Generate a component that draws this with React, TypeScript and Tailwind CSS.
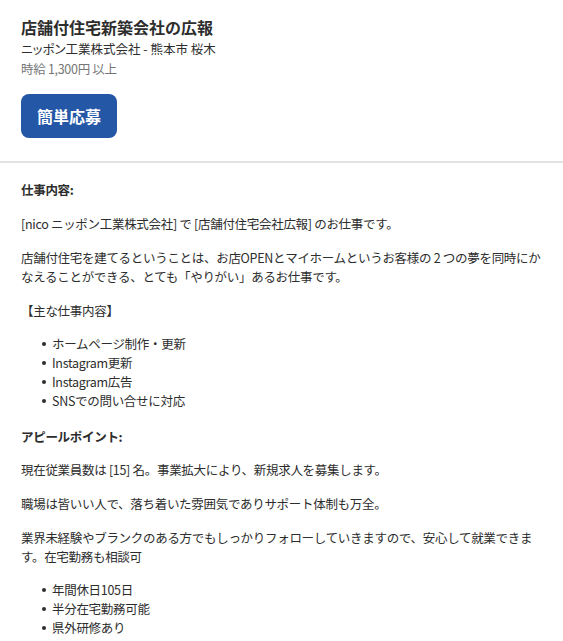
import React from "react";

const font = { fontFamily: '"Noto Sans CJK JP", "Noto Sans", sans-serif' };

function Item({ children }: { children: React.ReactNode }) {
  return (
    <li className="flex items-center">
      <span className="ml-[21px] mr-[6px] w-[4px] h-[4px] rounded-full bg-[#2d2d2d] shrink-0" />
      <span>{children}</span>
    </li>
  );
}

export default function App() {
  return (
    <div className="bg-white text-[#2d2d2d] w-full min-h-[641px]" style={font}>
      <div className="px-[21px] pt-[15px] pb-[23px]">
        <h1 className="text-[16px] leading-[24px] font-bold text-[#2d2d2d]">店舗付住宅新築会社の広報</h1>
        <div className="text-[12.5px] leading-[20px] text-[#2d2d2d] [font-feature-settings:'palt']">ニッポン工業株式会社 - 熊本市 桜木</div>
        <div className="text-[12.5px] leading-[20px] tracking-[-0.3px] text-[#767676]">時給 1,300円 以上</div>
        <button className="mt-[15px] h-[44px] w-[96px] rounded-[8px] bg-[#2557a7] text-white text-[16px] font-bold flex items-center justify-center">
          簡単応募
        </button>
      </div>
      <div className="h-[2px] bg-[#e4e2e0]" />
      <div className="px-[21px] pt-[17px] text-[12.5px] tracking-[-0.3px] leading-[19px] flex flex-col gap-[15px]">
        <p className="font-bold">仕事内容:</p>
        <p>[nico ニッポン工業株式会社] で [店舗付住宅会社広報] のお仕事です。</p>
        <p>店舗付住宅を建てるということは、お店OPENとマイホームというお客様の 2 つの夢を同時にかなえることができる、とても「やりがい」あるお仕事です。</p>
        <p>【主な仕事内容】</p>
        <ul className="-mt-[1px]">
          <Item>ホームページ制作・更新</Item>
          <Item>Instagram更新</Item>
          <Item>Instagram広告</Item>
          <Item>SNSでの問い合せに対応</Item>
        </ul>
        <p className="font-bold mt-[2px]">アピールポイント:</p>
        <p className="-mt-[1px]">現在従業員数は [15] 名。事業拡大により、新規求人を募集します。</p>
        <p>職場は皆いい人で、落ち着いた雰囲気でありサポート体制も万全。</p>
        <p>業界未経験やブランクのある方でもしっかりフォローしていきますので、安心して就業できます。在宅勤務も相談可</p>
        <ul className="-mt-[1px]">
          <Item>年間休日105日</Item>
          <Item>半分在宅勤務可能</Item>
          <Item>県外研修あり</Item>
        </ul>
      </div>
    </div>
  );
}
